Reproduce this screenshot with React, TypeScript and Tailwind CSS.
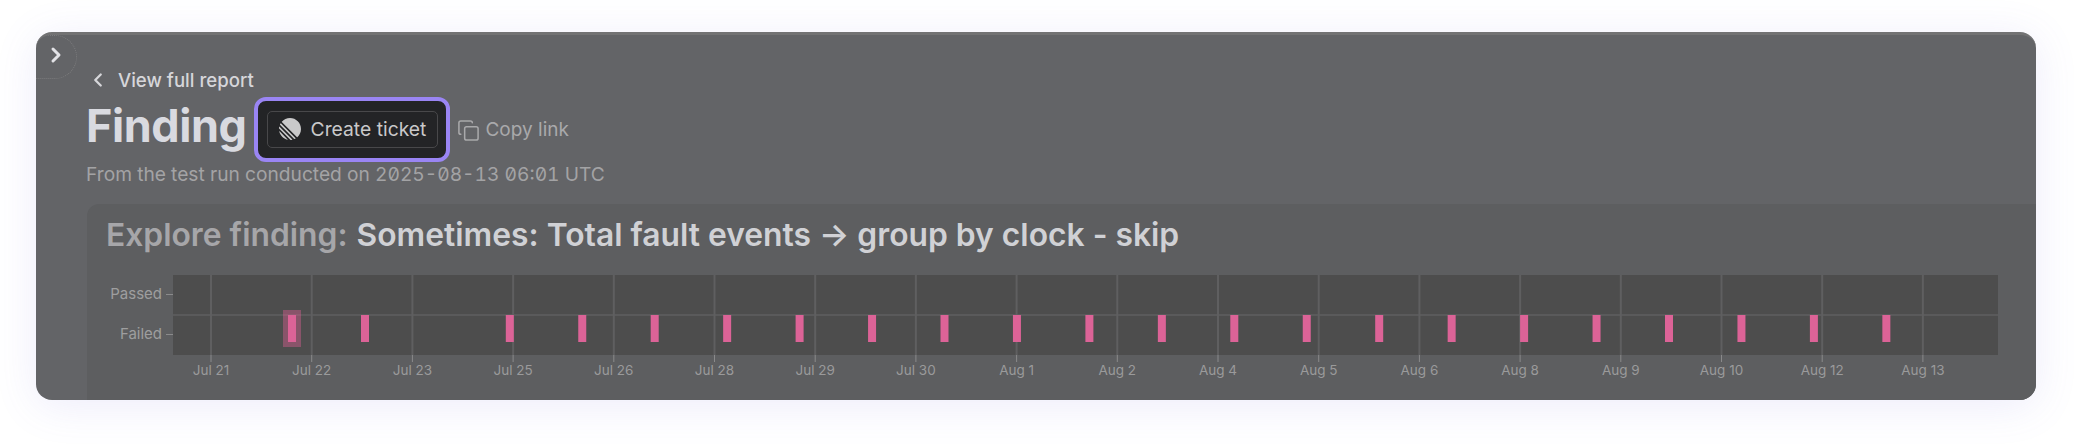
import React from 'react';
import { ChevronLeft, ChevronRight, Copy } from 'lucide-react';

const dateLabels = [
  'Jul 21', 'Jul 22', 'Jul 23', 'Jul 25', 'Jul 26', 'Jul 28', 'Jul 29', 'Jul 30', 'Aug 1',
  'Aug 2', 'Aug 4', 'Aug 5', 'Aug 6', 'Aug 8', 'Aug 9', 'Aug 10', 'Aug 12', 'Aug 13',
];

// x positions below are relative to the chart svg, which starts at the panel edge
const gridX = dateLabels.map((_, i) => 124 + i * 100.7);
const barX = [205, 278, ...Array.from({ length: 20 }, (_, i) => 422.8 + i * 72.45)];

const TimelineChart: React.FC = () => (
  <svg width={1949} height={110} className="block" style={{ fontFamily: 'Inter, sans-serif' }}>
    <rect x={86} y={5} width={1825} height={80} fill="#4d4d4d" />
    <rect x={86} y={44} width={1825} height={2} fill="#5a5a5b" />
    {gridX.map((x, i) => (
      <g key={i}>
        <rect x={x - 1} y={5} width={2} height={80} fill="#5f5f60" />
        <rect x={x - 0.5} y={85} width={1} height={7} fill="#8a8a8b" />
        <text x={x} y={105} textAnchor="middle" fontSize={13.5} fill="#9a9a9b">{dateLabels[i]}</text>
      </g>
    ))}
    <text x={75} y={29} textAnchor="end" fontSize={15} fill="#9e9e9f">Passed</text>
    <text x={75} y={69} textAnchor="end" fontSize={15} fill="#9e9e9f">Failed</text>
    <rect x={79} y={24} width={7} height={1} fill="#8a8a8b" />
    <rect x={79} y={64} width={7} height={1} fill="#8a8a8b" />
    <rect x={196} y={40} width={18} height={37} fill="#e35f96" fillOpacity={0.4} />
    {barX.map((x, i) => (
      <rect key={i} x={x - 4} y={45} width={8} height={27} fill="#dc6397" />
    ))}
  </svg>
);

const LinearLogo: React.FC = () => (
  <svg viewBox="0 0 100 100" className="w-[22px] h-[22px] shrink-0" fill="#c9c9ca">
    <path d="M1.22541 61.5228c-.2225-.9485.90748-1.5459 1.59638-.857L39.3342 97.1782c.6889.6889.0915 1.8189-.857 1.5964C20.0515 94.4522 5.54779 79.9485 1.22541 61.5228ZM.00189135 46.8891c-.01764375.2833.08887215.5599.28957165.7606L52.3503 99.7085c.2007.2007.4773.3075.7606.2896 2.3692-.1476 4.6938-.46 6.9624-.9259.7645-.157 1.0301-1.0963.4782-1.6481L2.57595 39.4485c-.55186-.5519-1.49117-.2863-1.648174.4782-.465915 2.2686-.77832 4.5932-.92588465 6.9624ZM4.21093 29.7054c-.16649.3738-.08169.8106.20765 1.1l64.77602 64.776c.2894.2894.7262.3742 1.1.2077 1.7861-.7956 3.5171-1.6927 5.1855-2.684.5521-.328.6373-1.0867.1832-1.5407L8.43566 24.3367c-.45409-.4541-1.21271-.3689-1.54074.1832-.99132 1.6684-1.88843 3.3994-2.68399 5.1855ZM12.6587 18.074c-.3701-.3701-.393-.9637-.0443-1.3541C21.7795 6.45931 35.1114 0 49.9519 0 77.5927 0 100 22.4073 100 50.0481c0 14.8405-6.4593 28.1724-16.7199 37.3375-.3903.3487-.984.3258-1.3542-.0443L12.6587 18.074Z" />
  </svg>
);

const App: React.FC = () => {
  return (
    <div className="h-[448px] w-[2080px] bg-white px-9 pt-8 overflow-hidden font-['Inter',sans-serif]">
      <div className="relative h-[368px] w-[2000px] rounded-2xl bg-[#636467] border-t-[3px] border-[#727273] overflow-hidden shadow-[0_6px_44px_rgba(110,100,220,0.12)]">
        {/* Sidebar toggle */}
        <div className="absolute left-0 top-0 w-[41px] h-[44px] rounded-r-[24px] border border-l-0 border-dotted border-[#7c7c7e] flex items-center justify-center">
          <ChevronRight className="w-[24px] h-[24px] text-[#e2e2e6] -mt-[5px]" strokeWidth={3} />
        </div>

        <div className="flex flex-col pt-[32px]">
          <div className="flex items-center ml-[51px] h-[26px] gap-[9px] text-[#d6d6da]">
            <ChevronLeft className="w-[22px] h-[22px]" strokeWidth={2.5} />
            <span className="text-[18.6px] leading-[26px] font-medium">View full report</span>
          </div>

          <div className="flex items-center ml-[50px] mt-[4px] h-[64px]">
            <h1 className="text-[45px] leading-[64px] -mt-[7px] font-bold text-[#d9dae0] tracking-[-0.01em]">Finding</h1>
            <div className="ml-[8px] w-[196px] h-[65px] rounded-[12px] border-[4px] border-[#9a85f4] bg-[#232426] flex items-center justify-center">
              <button className="w-[171px] h-[37px] rounded-[5px] border border-[#48484a] flex items-center justify-center gap-[10px] text-[19.3px] text-[#c9c9ca]">
                <LinearLogo />
                Create ticket
              </button>
            </div>
            <div className="flex items-center ml-[7px] gap-[5px] text-[#a9a9ab] mt-[2px]">
              <Copy className="w-[23px] h-[23px]" strokeWidth={1.6} />
              <span className="text-[19px]">Copy link</span>
            </div>
          </div>

          <p className="ml-[50px] mt-[1px] text-[19.2px] leading-[24px] text-[#a3a3a5] [font-feature-settings:'zero','tnum']">
            From the test run conducted on 2025-08-13 06:01 UTC
          </p>

          {/* Explore panel */}
          <div className="ml-[51px] mt-[18px] h-[200px] rounded-tl-xl bg-[#5d5e60]">
            <h2 className="pl-[19px] pt-[11px] h-[66px] text-[31.8px] leading-[40px] font-semibold text-[#d0d1d5]">
              <span className="text-[#a6a6a9] mr-[1px]">Explore finding: </span>
              Sometimes: Total fault events → group by clock - skip
            </h2>
            <TimelineChart />
          </div>
        </div>
      </div>
    </div>
  );
};

export default App;
